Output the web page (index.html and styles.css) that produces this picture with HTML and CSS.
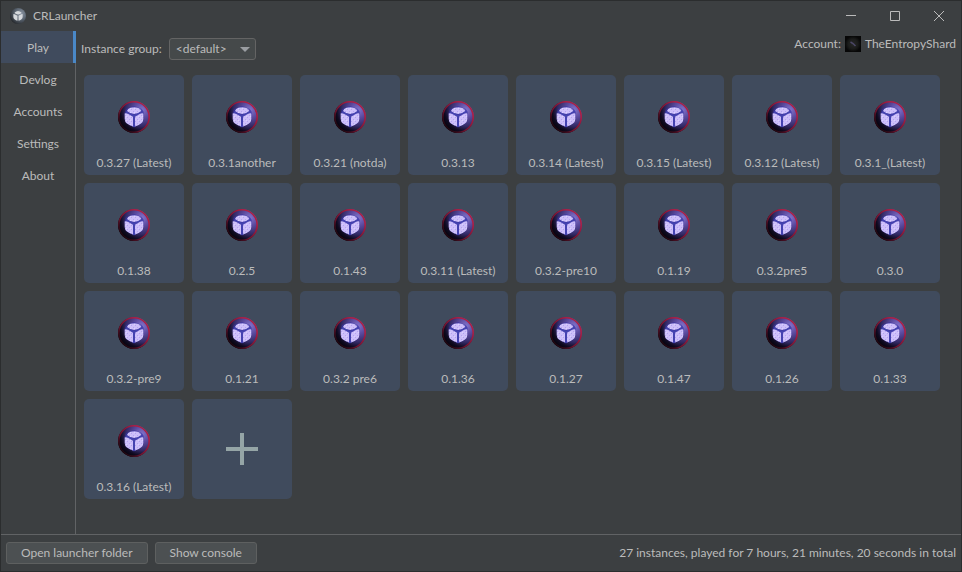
FILE: index.html
```html
<!DOCTYPE html>
<html lang="en">
<head>
<meta charset="utf-8">
<title>CRLauncher</title>
<link rel="stylesheet" href="styles.css">
</head>
<body>
<svg class="defs" width="0" height="0" aria-hidden="true">
  <defs>
    <radialGradient id="orb" cx="24" cy="9" r="27" gradientUnits="userSpaceOnUse">
      <stop offset="0" stop-color="#8474cc"/>
      <stop offset=".3" stop-color="#5a4a9e"/>
      <stop offset=".6" stop-color="#332a66"/>
      <stop offset=".8" stop-color="#0f0a20"/>
      <stop offset="1" stop-color="#020004"/>
    </radialGradient>
    <linearGradient id="rim" x1="5" y1="27" x2="24" y2="8" gradientUnits="userSpaceOnUse">
      <stop offset="0" stop-color="#1c0610"/>
      <stop offset=".4" stop-color="#70142e"/>
      <stop offset="1" stop-color="#ac1f42"/>
    </linearGradient>
    <radialGradient id="orb-gray" cx="22" cy="11" r="24" gradientUnits="userSpaceOnUse">
      <stop offset="0" stop-color="#8b95a3"/>
      <stop offset=".5" stop-color="#5a6470"/>
      <stop offset="1" stop-color="#24272b"/>
    </radialGradient>
    <pattern id="grain" width="4" height="4" patternUnits="userSpaceOnUse">
      <rect width="4" height="4" fill="#cdbffa"/>
      <rect width="1" height="1" x="1" fill="#b4a2f0"/>
      <rect width="1" height="1" x="3" y="2" fill="#b5a3f1"/>
      <rect width="1" height="1" y="3" fill="#dbd1ff"/>
    </pattern>
    <symbol id="cube" viewBox="0 0 32 32">
      <path d="M9 10Q9.500 7.800 12.500 6.800Q16 5.600 19.500 6.800Q22.800 7.800 23.200 10Q20 12.700 16.200 13Q12 12.700 9 10Z"/>
      <path d="M6.700 12.500Q8 11.600 10.300 13L15 15.700V25.600Q11.800 24.700 9 22.500Q6.800 21 6.700 18Z"/>
      <path d="M25.300 12.500Q24 11.600 21.700 13L17 15.700V25.600Q20.200 24.700 23 22.500Q25.200 21 25.300 18Z"/>
    </symbol>
    <symbol id="instance" viewBox="0 0 32 32">
      <circle cx="16" cy="16" r="16" fill="url(#orb)"/>
      <circle cx="16" cy="16" r="15.200" fill="none" stroke="url(#rim)" stroke-width="1.600"/>
      <path d="M8 8L16 5L24 8L26 12L24 22L16 26.500L8 22L6.500 12Z" fill="#3634a5" opacity=".6"/>
      <path d="M8 11L16 15L25 10M16 15V26" fill="none" stroke="#4442b0" stroke-width="2"/>
      <use href="#cube" width="32" height="32" fill="url(#grain)"/>
    </symbol>
  </defs>
</svg>

<div class="window">
  <header class="titlebar">
    <svg class="app-icon" viewBox="0 0 32 32" aria-hidden="true">
      <circle cx="16" cy="16" r="16" fill="url(#orb-gray)"/>
      <use href="#cube" width="32" height="32" fill="#d5d8dc"/>
    </svg>
    <h1 class="title">CRLauncher</h1>
    <div class="window-buttons">
      <button class="window-button" type="button" aria-label="Minimize"><svg viewBox="0 0 10 10"><path d="M0 4.500H10"/></svg></button>
      <button class="window-button" type="button" aria-label="Maximize"><svg viewBox="0 0 10 10"><path d="M.5.500H9.500V9.500H.5Z"/></svg></button>
      <button class="window-button" type="button" aria-label="Close"><svg viewBox="0 0 10 10"><path d="M0 0L10 10M10 0L0 10"/></svg></button>
    </div>
  </header>

  <div class="body">
    <nav class="tabs">
      <a class="tab tab-active" href="#play" aria-current="page">Play</a>
      <a class="tab" href="#devlog">Devlog</a>
      <a class="tab" href="#accounts">Accounts</a>
      <a class="tab" href="#settings">Settings</a>
      <a class="tab" href="#about">About</a>
    </nav>

    <main class="content">
      <div class="toolbar">
        <div class="group">
          <label for="group">Instance group:</label>
          <select id="group" class="combo"><option>&lt;default&gt;</option></select>
        </div>
        <div class="account">
          <span>Account:</span>
          <svg class="avatar" viewBox="0 0 16 16" aria-hidden="true">
            <defs><radialGradient id="skin"><stop offset="0" stop-color="#262726"/><stop offset=".6" stop-color="#1b1c1b"/><stop offset="1" stop-color="#070707"/></radialGradient></defs>
            <rect width="16" height="16" fill="url(#skin)"/>
            <path d="M5.500 6L8 7.500L10.500 10" fill="none" stroke="#4b4766" stroke-width="1.500"/>
          </svg>
          <span>TheEntropyShard</span>
        </div>
      </div>
      <div class="instances" id="instances">
        <button class="tile add" type="button" aria-label="Add instance"><svg viewBox="0 0 32 32"><path d="M16 0V32M0 16H32"/></svg></button>
      </div>
    </main>
  </div>

  <footer class="footer">
    <button class="button" type="button">Open launcher folder</button>
    <button class="button" type="button">Show console</button>
    <p class="status">27 instances, played for 7 hours, 21 minutes, 20 seconds in total</p>
  </footer>
</div>
<script src="app.js"></script>
</body>
</html>
```

FILE: styles.css
```css
* { box-sizing: border-box; }

body {
  margin: 0;
  background: #3c3f41;
  color: #bbbbbb;
  font: 12px/16px Lato, "Noto Sans", sans-serif;
}

button, select { font: inherit; color: inherit; }
.defs { position: absolute; }

.window {
  display: flex;
  flex-direction: column;
  min-height: 100vh;
  border: 1px solid #2b2d2e;
}

.titlebar {
  display: flex;
  align-items: center;
  height: 30px;
  padding-left: 9px;
}
.app-icon { width: 16px; height: 16px; }
.title { margin: 0 0 0 7px; font-size: 12px; font-weight: 400; }
.window-buttons { display: flex; align-self: stretch; margin-left: auto; }
.window-button {
  display: grid;
  place-items: center;
  width: 44px;
  padding: 0;
  border: 0;
  background: none;
}
.window-button svg {
  width: 10px;
  height: 10px;
  fill: none;
  stroke: #bbbbbb;
}

.body { display: flex; flex: 1; }

.tabs { width: 75px; border-right: 1px solid #616365; }
.tab {
  display: block;
  padding: 9px 0 7px;
  color: inherit;
  text-align: center;
  text-decoration: none;
}
.tab-active {
  margin-right: -1px;
  padding-right: 1px;
  background: #404b5d;
  box-shadow: inset -3px 0 #4a88c7;
}

.content { flex: 1; min-width: 0; }

.toolbar {
  display: flex;
  justify-content: space-between;
  align-items: flex-start;
  padding: 5px;
}
.group { display: flex; align-items: center; gap: 7px; padding-top: 2px; }
.account { display: flex; align-items: center; gap: 4px; }
.avatar { width: 16px; height: 16px; }

.combo {
  width: 87px;
  height: 22px;
  padding: 0 6px;
  border: 1px solid #646464;
  border-radius: 3px;
  appearance: none;
  background: #45494a url("data:image/svg+xml,%3Csvg xmlns='http://www.w3.org/2000/svg' viewBox='0 0 10 5'%3E%3Cpath d='M0 0H10L5 5Z' fill='%239a9da1'/%3E%3C/svg%3E") right 5px center / 10px 5px no-repeat;
}

.instances {
  display: flex;
  flex-wrap: wrap;
  gap: 8px;
  padding: 10px 8px 8px;
}
.tile {
  display: flex;
  flex-direction: column;
  align-items: center;
  gap: 22px;
  width: 100px;
  height: 100px;
  padding: 26px 0 4px;
  border: 0;
  border-radius: 5px;
  background: #404b5d;
  white-space: nowrap;
}
.tile svg { flex: none; width: 32px; height: 32px; }
.add { justify-content: center; padding: 0; }
.add path { stroke: #95a5a6; stroke-width: 4; }

.footer {
  display: flex;
  align-items: center;
  gap: 7px;
  padding: 7px 5px;
  border-top: 1px solid #616365;
}
.button {
  height: 22px;
  padding: 0 14px;
  border: 1px solid #5e6060;
  border-radius: 3px;
  background: #4c5052;
  line-height: 20px;
}
.status { margin: 0 0 0 auto; }
```

FILE: app.js
```js
const names = [
  "0.3.27 (Latest)", "0.3.1another", "0.3.21 (notda)", "0.3.13",
  "0.3.14 (Latest)", "0.3.15 (Latest)", "0.3.12 (Latest)", "0.3.1_(Latest)",
  "0.1.38", "0.2.5", "0.1.43", "0.3.11 (Latest)",
  "0.3.2-pre10", "0.1.19", "0.3.2pre5", "0.3.0",
  "0.3.2-pre9", "0.1.21", "0.3.2 pre6", "0.1.36",
  "0.1.27", "0.1.47", "0.1.26", "0.1.33",
  "0.3.16 (Latest)"
];

const list = document.getElementById("instances");
const add = list.querySelector(".add");

for (const name of names) {
  const tile = document.createElement("button");
  tile.type = "button";
  tile.className = "tile";
  tile.innerHTML = '<svg aria-hidden="true"><use href="#instance"/></svg><span></span>';
  tile.querySelector("span").textContent = name;
  list.insertBefore(tile, add);
}
```
